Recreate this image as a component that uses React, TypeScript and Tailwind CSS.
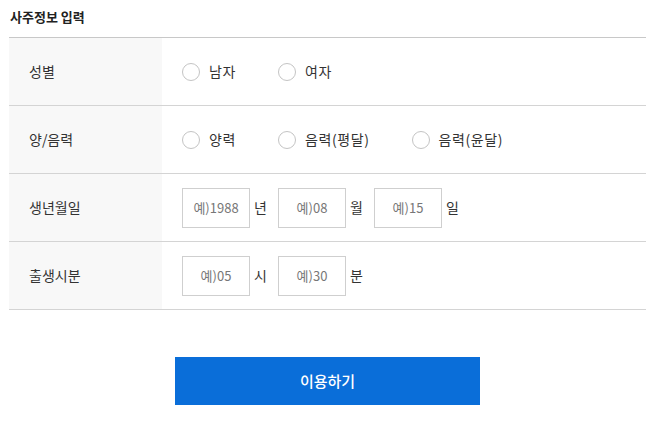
import React, { useState } from 'react';

const font = { fontFamily: '"Noto Sans CJK KR", "Noto Sans", sans-serif' };

function Radio({ label, checked, onChange }: { label: string; checked: boolean; onChange: () => void }) {
  return (
    <label className="flex items-center mr-[42px] cursor-pointer" onClick={onChange}>
      <span className="w-[18px] h-[18px] rounded-full border-[1.5px] border-[#c4c4c4] bg-white flex items-center justify-center">
        {checked && <span className="w-[8px] h-[8px] rounded-full bg-[#0a6ed9]" />}
      </span>
      <span className="ml-[9px] text-[14px] tracking-[0.6px] text-[#333]">{label}</span>
    </label>
  );
}

function Field({ placeholder, unit }: { placeholder: string; unit: string }) {
  return (
    <div className="flex items-center">
      <input
        type="text"
        placeholder={placeholder}
        className="w-[68px] h-[40px] border border-[#cfcfcf] text-center text-[13px] text-[#333] placeholder:text-[#777] outline-none"
      />
      <span className="ml-1 w-6 text-[14px] text-[#333]">{unit}</span>
    </div>
  );
}

function Row({ label, children }: { label: string; children: React.ReactNode }) {
  return (
    <div className="flex h-[68px] border-b border-[#d4d4d4]">
      <div className="w-[153px] bg-[#f8f8f8] flex items-center pl-[20px] text-[14px] text-[#333]">{label}</div>
      <div className="flex-1 flex items-center pl-5">{children}</div>
    </div>
  );
}

export default function App() {
  const [gender, setGender] = useState('');
  const [calendar, setCalendar] = useState('');

  return (
    <div className="bg-white min-h-[445px]" style={font}>
      <div className="ml-[9px] w-[637px]">
        <h2 className="h-[37px] pt-[7px] pl-px text-[13px] font-bold text-[#222]">사주정보 입력</h2>
        <div className="border-t border-[#c8c8c8]">
          <Row label="성별">
            <Radio label="남자" checked={gender === 'm'} onChange={() => setGender('m')} />
            <Radio label="여자" checked={gender === 'f'} onChange={() => setGender('f')} />
          </Row>
          <Row label="양/음력">
            <Radio label="양력" checked={calendar === 'solar'} onChange={() => setCalendar('solar')} />
            <Radio label="음력(평달)" checked={calendar === 'lunar'} onChange={() => setCalendar('lunar')} />
            <Radio label="음력(윤달)" checked={calendar === 'leap'} onChange={() => setCalendar('leap')} />
          </Row>
          <Row label="생년월일">
            <Field placeholder="예)1988" unit="년" />
            <Field placeholder="예)08" unit="월" />
            <Field placeholder="예)15" unit="일" />
          </Row>
          <Row label="출생시분">
            <Field placeholder="예)05" unit="시" />
            <Field placeholder="예)30" unit="분" />
          </Row>
        </div>
        <div className="flex justify-center pt-[47px]">
          <button className="w-[305px] h-[48px] bg-[#0a6ed9] text-white text-[15px] font-medium">이용하기</button>
        </div>
      </div>
    </div>
  );
}
